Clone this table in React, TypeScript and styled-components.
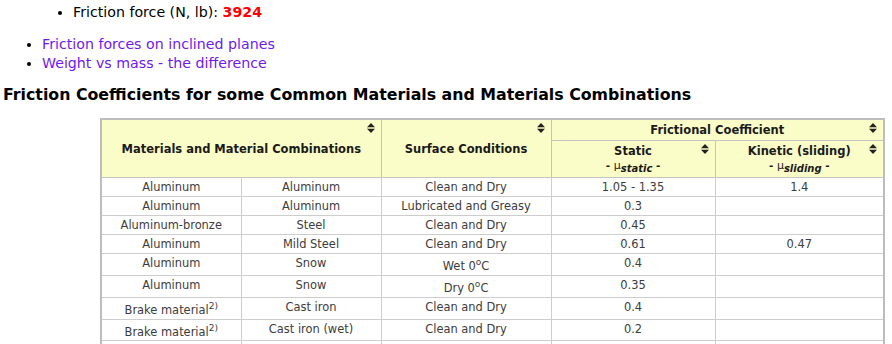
import styled, { createGlobalStyle } from 'styled-components';

const GlobalStyle = createGlobalStyle`
  html, body {
    margin: 0;
    padding: 0;
    background: #fff;
  }
  body {
    font-family: "DejaVu Sans", Verdana, sans-serif;
    color: #000;
  }
`;

const Page = styled.div`
  padding-top: 3px;
`;

const ResultList = styled.ul`
  margin: 0;
  padding-left: 73px;
  font-size: 14.2px;
  line-height: 19px;
`;

const LinkList = styled.ul`
  margin: 13px 0 0;
  padding-left: 42px;
  font-size: 14.2px;
  line-height: 19px;
`;

const Value = styled.b`
  color: #ff0000;
`;

const Link = styled.a`
  color: #7018ee;
  text-decoration: none;
`;

const Heading = styled.h3`
  margin: 12px 0 0 3px;
  font-size: 15.8px;
  line-height: 20px;
  font-weight: bold;
`;

const Table = styled.table`
  margin: 13px 0 0 100px;
  width: 783px;
  table-layout: fixed;
  border-collapse: collapse;
  border: 2px solid #bdbdbd;
  font-size: 11.45px;
`;

const Th = styled.th`
  position: relative;
  background: #fbfdc8;
  color: #1a1a1a;
  font-size: 11.5px;
  font-weight: bold;
  border: 1px solid #c4c4c4;
  padding: 3px 4px;
  vertical-align: middle;
`;

const Small = styled.div`
  font-size: 10.5px;
  margin-top: 1px;
`;

const Mu = styled.span`
  font-weight: normal;
  font-size: 11px;
  sub {
    font-weight: bold;
    font-style: italic;
    font-size: 10px;
  }
`;

const Td = styled.td`
  border: 1px solid #cdcdcd;
  padding: 2px 4px;
  text-align: center;
  vertical-align: top;
  color: #3c3c3c;
  line-height: 14px;
  sup {
    font-size: 9px;
    line-height: 13px;
  }
`;

const SortMark = styled.svg`
  position: absolute;
  top: 3px;
  right: 6px;
`;

const Sort = () => (
  <SortMark width="8" height="10" viewBox="0 0 8 10">
    <path d="M0 4.2 L4 0 L8 4.2 Z M0 5.8 L4 10 L8 5.8 Z" fill="#222" />
  </SortMark>
);

const rows: [React.ReactNode, string, React.ReactNode, string, string][] = [
  ['Aluminum', 'Aluminum', 'Clean and Dry', '1.05 - 1.35', '1.4'],
  ['Aluminum', 'Aluminum', 'Lubricated and Greasy', '0.3', ''],
  ['Aluminum-bronze', 'Steel', 'Clean and Dry', '0.45', ''],
  ['Aluminum', 'Mild Steel', 'Clean and Dry', '0.61', '0.47'],
  ['Aluminum', 'Snow', <>Wet 0<sup>o</sup>C</>, '0.4', ''],
  ['Aluminum', 'Snow', <>Dry 0<sup>o</sup>C</>, '0.35', ''],
  [<>Brake material<sup>2)</sup></>, 'Cast iron', 'Clean and Dry', '0.4', ''],
  [<>Brake material<sup>2)</sup></>, 'Cast iron (wet)', 'Clean and Dry', '0.2', ''],
  ['Brass', 'Cast iron', 'Clean and Dry', '', '0.3'],
];

export default function App() {
  return (
    <Page>
      <GlobalStyle />
      <ResultList>
        <li>Friction force (N, lb): <Value>3924</Value></li>
      </ResultList>
      <LinkList>
        <li><Link href="#">Friction forces on inclined planes</Link></li>
        <li><Link href="#">Weight vs mass - the difference</Link></li>
      </LinkList>
      <Heading>Friction Coefficients for some Common Materials and Materials Combinations</Heading>
      <Table>
        <colgroup>
          <col style={{ width: 140 }} />
          <col style={{ width: 140 }} />
          <col style={{ width: 170 }} />
          <col style={{ width: 164 }} />
          <col style={{ width: 169 }} />
        </colgroup>
        <thead>
          <tr>
            <Th colSpan={2} rowSpan={2}>Materials and Material Combinations<Sort /></Th>
            <Th rowSpan={2}>Surface Conditions<Sort /></Th>
            <Th colSpan={2}>Frictional Coefficient<Sort /></Th>
          </tr>
          <tr>
            <Th>
              Static<Sort />
              <Small>- <Mu>μ<sub>static</sub></Mu> -</Small>
            </Th>
            <Th>
              Kinetic (sliding)<Sort />
              <Small>- <Mu>μ<sub>sliding</sub></Mu> -</Small>
            </Th>
          </tr>
        </thead>
        <tbody>
          {rows.map((r, i) => (
            <tr key={i}>
              {r.map((c, j) => <Td key={j}>{c}</Td>)}
            </tr>
          ))}
        </tbody>
      </Table>
    </Page>
  );
}
